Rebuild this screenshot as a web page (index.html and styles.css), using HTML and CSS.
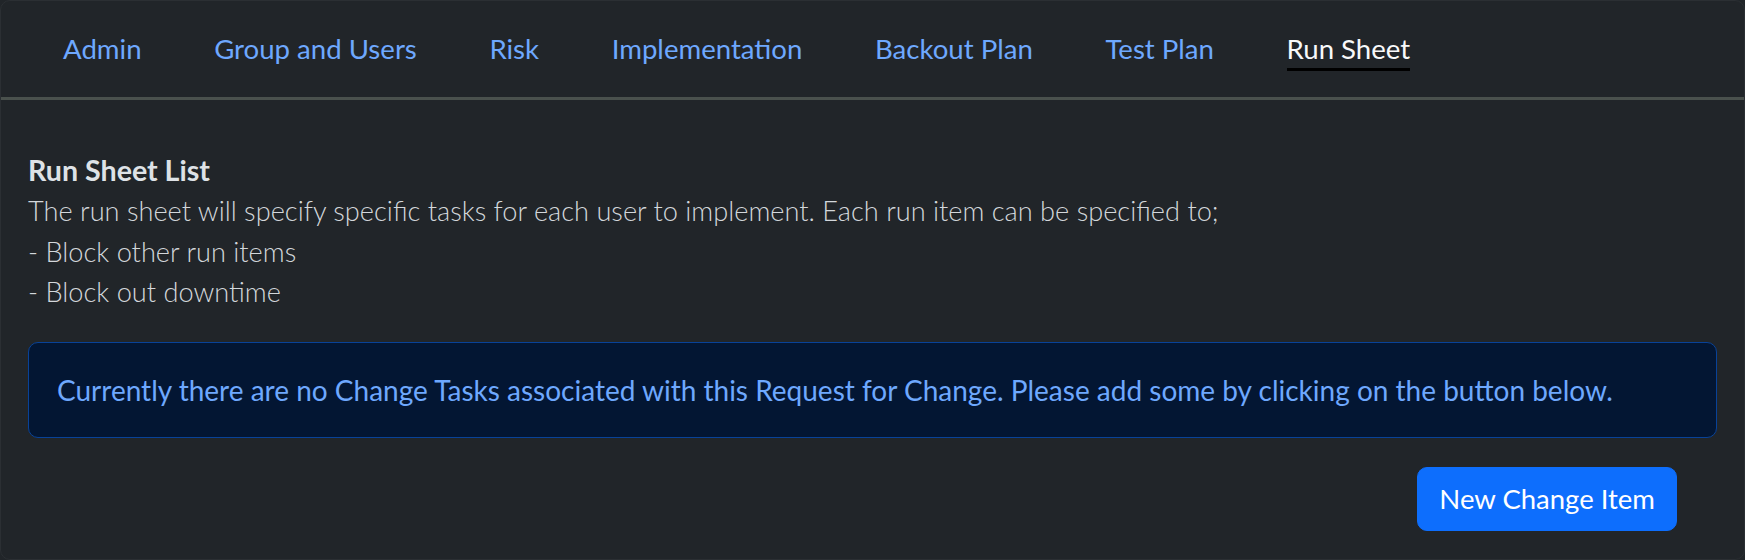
FILE: index.html
```html
<!DOCTYPE html>
<html lang="en">
<head>
<meta charset="utf-8">
<title>Run Sheet</title>
<link rel="stylesheet" href="styles.css">
</head>
<body>
<div class="card">
  <div class="card-header">
    <ul class="tabs">
      <li><a class="tab" href="#">Admin</a></li>
      <li><a class="tab" href="#">Group and Users</a></li>
      <li><a class="tab" href="#">Risk</a></li>
      <li><a class="tab" href="#">Implementation</a></li>
      <li><a class="tab" href="#">Backout Plan</a></li>
      <li><a class="tab" href="#">Test Plan</a></li>
      <li><a class="tab active" href="#">Run Sheet</a></li>
    </ul>
  </div>
  <div class="card-body">
    <div class="intro">
      <strong class="title">Run Sheet List</strong>
      <p class="desc">The run sheet will specify specific tasks for each user to implement. Each run item can be specified to;<br>- Block other run items<br>- Block out downtime</p>
    </div>
    <div class="alert">Currently there are no Change Tasks associated with this Request for Change. Please add some by clicking on the button below.</div>
    <div class="actions">
      <button class="btn" type="button">New Change Item</button>
    </div>
  </div>
</div>
</body>
</html>
```
FILE: styles.css
```css
html, body {
  margin: 0;
  padding: 0;
  background: #212529;
}
body {
  font-family: "Lato", "Noto Sans", sans-serif;
  font-size: 27.2px;
  line-height: 40.8px;
  color: #dee2e6;
}
.card {
  box-sizing: border-box;
  width: 1745px;
  height: 560px;
  border: 1px solid #2b2f33;
  border-radius: 10px;
  background: #212529;
  overflow: hidden;
}
.card-header {
  padding: 29px 0 26px 62px;
  border-bottom: 3px solid #4a514d;
}
.tabs {
  list-style: none;
  margin: 0;
  padding: 0;
  display: flex;
  gap: 72.6px;
}
.tab {
  display: block;
  font-size: 27.6px;
  line-height: 38px;
  color: #6ea8fe;
  text-decoration: none;
  border-bottom: 3px solid transparent;
}
.tab.active {
  color: #f8f9fa;
  border-bottom-color: #000;
}
.card-body {
  padding: 50px 27px 27px 27px;
}
.title {
  display: block;
  font-size: 28.6px;
  font-weight: 700;
  line-height: 40.8px;
  color: #dee2e6;
}
.desc {
  margin: 0;
  font-weight: 300;
  font-size: 27.2px;
  line-height: 40.8px;
  color: #d3d7db;
}
.alert {
  margin-top: 28.5px;
  padding: 27px 28px;
  border: 1px solid #084298;
  border-radius: 10px;
  background: #031633;
  color: #6ea8fe;
  font-size: 28px;
  line-height: 40.8px;
}
.actions {
  display: flex;
  justify-content: flex-end;
  margin-top: 29px;
  padding-right: 40px;
}
.btn {
  font-family: "Lato", "Noto Sans", sans-serif;
  font-size: 27.5px;
  line-height: 40.8px;
  padding: 10.2px 21px;
  border: 1px solid #0d6efd;
  border-radius: 10px;
  background: #0d6efd;
  color: #fff;
  cursor: pointer;
}
```
